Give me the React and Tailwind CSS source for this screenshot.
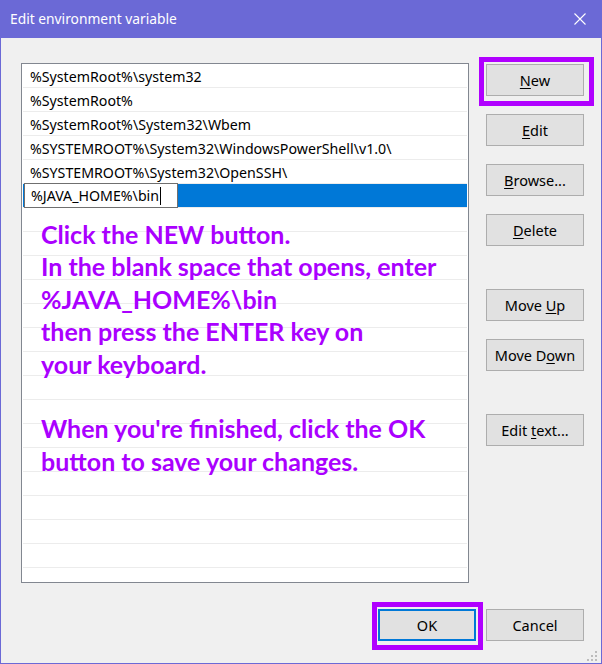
export default function App() {
  const rows = [
    "%SystemRoot%\\system32",
    "%SystemRoot%",
    "%SystemRoot%\\System32\\Wbem",
    "%SYSTEMROOT%\\System32\\WindowsPowerShell\\v1.0\\",
    "%SYSTEMROOT%\\System32\\OpenSSH\\",
  ];
  const empty = Array.from({ length: 16 });
  const ui = { fontFamily: '"Noto Sans", "Open Sans", sans-serif' };
  const btn =
    "h-[32px] w-[98px] flex items-center justify-center pt-[2px] bg-[#e1e1e1] border border-[#adadad] text-[14.5px] text-black";
  return (
    <div className="relative w-[602px] h-[664px] flex flex-col overflow-hidden" style={ui}>
      {/* Title bar */}
      <div className="h-[38px] bg-[#6b69d6] flex items-center justify-between pl-[10px] pr-[16px]">
        <span className="text-white text-[13.8px] pt-[1px]">Edit environment variable</span>
        <svg width="12" height="12" viewBox="0 0 12 12" className="block">
          <path d="M0.5 0.5 L11.5 11.5 M11.5 0.5 L0.5 11.5" stroke="white" strokeWidth="1.1" />
        </svg>
      </div>
      {/* Body */}
      <div className="flex-1 bg-[#f0f0f0] border-x border-b border-[#6b69d6] flex flex-col pt-[25px]">
        <div className="flex pl-[20px]">
          <div className="w-[448px] h-[520px] bg-white border border-[#828790] p-[1px] pt-0 overflow-hidden text-[14.2px] text-black">
            {rows.map((r) => (
              <div key={r} className="h-[24px] border-b border-[#ececec] flex items-center pt-[2px] pl-[7px] whitespace-nowrap">
                {r}
              </div>
            ))}
            <div className="h-[24px] border-b border-[#ececec] flex bg-[#0078d7]">
              <div className="-mt-[1px] ml-[1px] w-[154px] h-[25px] bg-white border border-[#6f6f6f] flex items-center pt-[1px] pl-[6px]">
                <span>%JAVA_HOME%\bin</span>
                <span className="inline-block w-[1px] h-[18px] bg-black ml-[1px]"></span>
              </div>
            </div>
            {empty.map((_, i) => (
              <div key={i} className="h-[24px] border-b border-[#ececec]"></div>
            ))}
          </div>
          <div className="ml-[17px] mt-[1px] flex flex-col">
            <div className={btn}>
              <span><span className="underline underline-offset-2">N</span>ew</span>
            </div>
            <div className={btn + " mt-[18px]"}>
              <span><span className="underline underline-offset-2">E</span>dit</span>
            </div>
            <div className={btn + " mt-[18px]"}>
              <span><span className="underline underline-offset-2">B</span>rowse...</span>
            </div>
            <div className={btn + " mt-[18px]"}>
              <span><span className="underline underline-offset-2">D</span>elete</span>
            </div>
            <div className={btn + " mt-[43px]"}>
              <span>Move <span className="underline underline-offset-2">U</span>p</span>
            </div>
            <div className={btn + " mt-[18px]"}>
              <span>Move D<span className="underline underline-offset-2">o</span>wn</span>
            </div>
            <div className={btn + " mt-[43px]"}>
              <span>Edit <span className="underline underline-offset-2">t</span>ext...</span>
            </div>
          </div>
        </div>
        <div className="flex justify-end gap-[10px] pr-[17px] mt-[26px]">
          <div className="h-[32px] w-[98px] flex items-center justify-center pt-[2px] bg-[#e1e1e1] border-2 border-[#0078d7] text-[14.5px] text-black">
            OK
          </div>
          <div className={btn}>Cancel</div>
        </div>
      </div>

      {/* Annotation overlays */}
      <div className="absolute left-[479px] top-[57px] w-[115px] h-[49px] border-[5px] border-[#b000ff]"></div>
      <div className="absolute left-[372px] top-[602px] w-[111px] h-[48px] border-[5px] border-[#b000ff]"></div>
      <div
        className="absolute left-[41px] top-[218px] text-[#aa00ff] font-bold text-[25px] leading-[32.4px] whitespace-nowrap"
        style={{ fontFamily: 'Lato, "Noto Sans", sans-serif' }}
      >
        <div>Click the NEW button.</div>
        <div>In the blank space that opens, enter</div>
        <div>%JAVA_HOME%\bin</div>
        <div>then press the ENTER key on</div>
        <div>your keyboard.</div>
        <div>&nbsp;</div>
        <div>When you're finished, click the OK</div>
        <div>button to save your changes.</div>
      </div>

      {/* Resize grip */}
      <svg className="absolute left-[587px] top-[651px]" width="11" height="11" viewBox="0 0 11 11">
        <rect x="8" y="0" width="2" height="2" fill="#bcbcbc" />
        <rect x="4" y="4" width="2" height="2" fill="#bcbcbc" />
        <rect x="8" y="4" width="2" height="2" fill="#bcbcbc" />
        <rect x="0" y="8" width="2" height="2" fill="#bcbcbc" />
        <rect x="4" y="8" width="2" height="2" fill="#bcbcbc" />
        <rect x="8" y="8" width="2" height="2" fill="#bcbcbc" />
      </svg>
    </div>
  );
}
